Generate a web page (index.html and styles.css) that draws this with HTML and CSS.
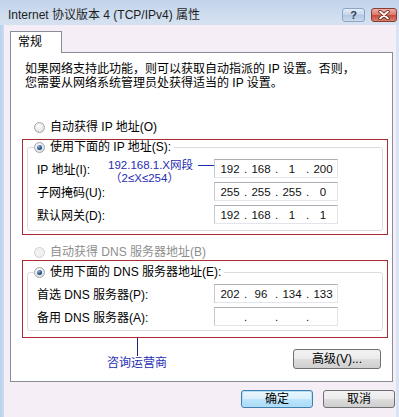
FILE: index.html
```html
<!DOCTYPE html>
<html>
<head>
    <meta charset="utf-8">
    <title>Internet 协议版本 4 (TCP/IPv4) 属性</title>
    <link rel="stylesheet" href="styles.css">
</head>
<body>
    <div class="window">
        <div class="titlebar">
            <span class="title">Internet 协议版本 4 (TCP/IPv4) 属性</span>
            <div class="caption-buttons">
                <span class="caption-btn help-btn">?</span>
                <span class="caption-btn close-btn">
                    <svg width="12" height="10" viewBox="0 0 12 10">
                        <path d="M2 1.5 L10 8.5 M10 1.5 L2 8.5" stroke="#5a1a14" stroke-width="3.4" stroke-linecap="round"/>
                        <path d="M2 1.5 L10 8.5 M10 1.5 L2 8.5" stroke="#fff" stroke-width="1.8" stroke-linecap="round"/>
                    </svg>
                </span>
            </div>
        </div>

        <div class="client">
            <div class="tab-strip">
                <div class="tab">常规</div>
            </div>

            <div class="tab-panel">
                <div class="intro">
                    <div>如果网络支持此功能，则可以获取自动指派的 IP 设置。否则，</div>
                    <div>您需要从网络系统管理员处获得适当的 IP 设置。</div>
                </div>

                <div class="radio-row first-radio"><span class="radio"></span>自动获得 IP 地址(O)</div>

                <div class="mark-box ip-mark">
                    <fieldset class="group">
                        <legend class="radio-row"><span class="radio checked"><span class="dot"></span></span>使用下面的 IP 地址(S):</legend>
                        <div class="field-list">
                            <div class="field-row">
                                <span class="field-label">IP 地址(I):</span>
                                <div class="note">
                                    <div class="note-line">192.168.1.X网段<span class="note-dash"></span></div>
                                    <div class="note-line sub">（2≤X≤254）</div>
                                </div>
                                <div class="ip-box">
                                    <span class="ip-seg">192</span><span class="ip-dot">.</span><span class="ip-seg">168</span><span class="ip-dot">.</span><span class="ip-seg">1</span><span class="ip-dot">.</span><span class="ip-seg">200</span>
                                </div>
                            </div>
                            <div class="field-row">
                                <span class="field-label">子网掩码(U):</span>
                                <div class="ip-box">
                                    <span class="ip-seg">255</span><span class="ip-dot">.</span><span class="ip-seg">255</span><span class="ip-dot">.</span><span class="ip-seg">255</span><span class="ip-dot">.</span><span class="ip-seg">0</span>
                                </div>
                            </div>
                            <div class="field-row">
                                <span class="field-label">默认网关(D):</span>
                                <div class="ip-box">
                                    <span class="ip-seg">192</span><span class="ip-dot">.</span><span class="ip-seg">168</span><span class="ip-dot">.</span><span class="ip-seg">1</span><span class="ip-dot">.</span><span class="ip-seg">1</span>
                                </div>
                            </div>
                        </div>
                    </fieldset>
                </div>

                <div class="radio-row disabled dns-auto"><span class="radio"></span>自动获得 DNS 服务器地址(B)</div>

                <div class="mark-box dns-mark">
                    <fieldset class="group">
                        <legend class="radio-row"><span class="radio checked"><span class="dot"></span></span>使用下面的 DNS 服务器地址(E):</legend>
                        <div class="field-list">
                            <div class="field-row">
                                <span class="field-label">首选 DNS 服务器(P):</span>
                                <div class="ip-box">
                                    <span class="ip-seg">202</span><span class="ip-dot">.</span><span class="ip-seg">96</span><span class="ip-dot">.</span><span class="ip-seg">134</span><span class="ip-dot">.</span><span class="ip-seg">133</span>
                                </div>
                            </div>
                            <div class="field-row">
                                <span class="field-label">备用 DNS 服务器(A):</span>
                                <div class="ip-box">
                                    <span class="ip-seg"></span><span class="ip-dot">.</span><span class="ip-seg"></span><span class="ip-dot">.</span><span class="ip-seg"></span><span class="ip-dot">.</span><span class="ip-seg"></span>
                                </div>
                            </div>
                        </div>
                    </fieldset>
                </div>

                <div class="panel-bottom">
                    <div class="isp-note">
                        <span class="isp-line"></span>
                        <span class="isp-text">咨询运营商</span>
                    </div>
                    <button class="button advanced-btn">高级(V)...</button>
                </div>
            </div>

            <div class="footer">
                <button class="button default-btn">确定</button>
                <button class="button">取消</button>
            </div>
        </div>
    </div>
</body>
</html>
```

FILE: styles.css
```css
body {
    margin: 0;
    font-family: "Liberation Sans", "Noto Sans CJK SC", sans-serif;
    font-size: 12px;
    color: #000;
}
.window {
    width: 399px;
    height: 417px;
    display: flex;
    flex-direction: column;
    overflow: hidden;
    background: linear-gradient(90deg, #b9cfeb, #cadcf1 4px, #d8e4f2 8px);
}
.titlebar {
    height: 25px;
    flex-shrink: 0;
    display: flex;
    justify-content: space-between;
    align-items: flex-start;
    background: linear-gradient(#c3d4ea, #d6e2f1);
}
.title {
    font-size: 12px;
    line-height: 14px;
    color: #1e1e1e;
    margin: 8px 0 0 8px;
}
.caption-buttons {
    display: flex;
    gap: 6px;
    margin: 8px 2px 0 0;
}
.caption-btn {
    height: 14px;
    box-sizing: border-box;
    border-radius: 3px;
    display: flex;
    align-items: center;
    justify-content: center;
}
.help-btn {
    width: 23px;
    border: 1px solid #8ea5c4;
    background: linear-gradient(#e4edf7, #c5d5ea 50%, #b4c8e2 51%, #cbdaee);
    font-size: 11px;
    font-weight: bold;
    color: #2b3b58;
}
.close-btn {
    width: 26px;
    border: 1px solid #8a3b34;
    background: linear-gradient(#eeb1a6, #d7786a 50%, #c3493b 51%, #d9806e);
}
.client {
    flex: 1;
    margin: 0 3px 0 4px;
    padding: 6px 1px 0 6px;
    background: #f6eef6;
    display: flex;
    flex-direction: column;
}
.tab-strip {
    display: flex;
    height: 21px;
}
.tab {
    position: relative;
    width: 52px;
    height: 22px;
    box-sizing: border-box;
    border: 1px solid #898c95;
    border-bottom: none;
    background: #fff;
    padding: 2px 0 0 7px;
    line-height: 17px;
}
.tab-panel {
    border: 1px solid #898c95;
    background: #fff;
    margin-right: 2px;
    padding: 0 4px 12px 11px;
}
.intro {
    margin: 9px 0 0 3px;
    line-height: 14px;
    white-space: nowrap;
}
.radio-row {
    display: flex;
    align-items: center;
    gap: 5px;
    height: 14px;
    line-height: 14px;
    white-space: nowrap;
}
.first-radio {
    margin: 30px 0 0 12px;
}
.radio {
    width: 11px;
    height: 11px;
    box-sizing: border-box;
    border-radius: 50%;
    border: 1px solid #a2a4a7;
    background: radial-gradient(circle at 40% 35%, #ffffff, #e2e3e5 70%, #c9cacd);
    display: flex;
    align-items: center;
    justify-content: center;
}
.dot {
    width: 5px;
    height: 5px;
    border-radius: 50%;
    background: radial-gradient(circle at 35% 30%, #8fb3dc, #1f4f86 60%, #0e2e57);
}
.disabled {
    color: #8e8e8e;
}
.disabled .radio {
    border-color: #cfd0d2;
    background: #f1f1f1;
}
.dns-auto {
    margin: 10px 0 0 12px;
}
.mark-box {
    border: 1px solid #aa2b33;
    padding: 0 4px 3px 4px;
}
.ip-mark {
    margin-top: 5px;
}
.dns-mark {
    margin-top: 1px;
    padding-bottom: 6px;
}
.dns-mark .group {
    margin-top: 4px;
    padding-bottom: 4px;
}
.group {
    margin: 0;
    padding: 0 0 6px 6px;
    border: 1px solid #dcdcdc;
    border-radius: 3px;
}
.group legend {
    padding: 0 3px 0 0;
}
.field-list {
    display: flex;
    flex-direction: column;
    gap: 4px;
    padding-top: 5px;
    margin-left: 3px;
}
.field-row {
    display: flex;
    align-items: center;
    height: 19px;
}
.field-label {
    white-space: nowrap;
}
.ip-box {
    width: 124px;
    height: 19px;
    box-sizing: border-box;
    margin-left: auto;
    margin-right: 44px;
    border: 1px solid #e2e6ec;
    border-top-color: #abadb3;
    border-left-color: #c6c9cf;
    padding-left: 2px;
    display: flex;
    align-items: center;
    font-size: 11.5px;
    color: #111;
}
.note + .ip-box {
    margin-left: 0;
}
.ip-seg {
    width: 26px;
    text-align: center;
}
.ip-dot {
    width: 5px;
    text-align: center;
}
.note {
    width: 106px;
    margin-left: auto;
    align-self: flex-start;
    height: 19px;
    color: #1f2db4;
    font-size: 11.5px;
    line-height: 13px;
}
.note-line {
    display: flex;
    align-items: center;
    white-space: nowrap;
}
.note-line.sub {
    padding-left: 2px;
}
.note-dash {
    flex: 1;
    height: 1px;
    margin-left: 5px;
    background: #1f2db4;
}
.panel-bottom {
    position: relative;
    display: flex;
    justify-content: flex-end;
    margin-top: 11px;
}
.isp-note {
    position: absolute;
    left: 84px;
    top: -11px;
    display: flex;
    flex-direction: column;
    align-items: center;
    width: 62px;
}
.isp-line {
    width: 1px;
    height: 18px;
    background: #1a2377;
}
.isp-text {
    color: #1f2db4;
    line-height: 14px;
    white-space: nowrap;
}
.button {
    font-family: "Liberation Sans", "Noto Sans CJK SC", sans-serif;
    font-size: 12px;
    color: #000;
    height: 19px;
    padding: 0;
    border: 1px solid #707070;
    border-radius: 3px;
    background: linear-gradient(#f2f2f2, #ebebeb 50%, #dddddd 51%, #cfcfcf);
    line-height: 15px;
}
.advanced-btn {
    width: 88px;
    height: 20px;
    margin-right: 7px;
}
.footer {
    display: flex;
    justify-content: flex-end;
    gap: 10px;
    margin-top: 8px;
}
.footer .button {
    width: 72px;
    height: 18px;
}
.default-btn {
    border-color: #3c7fb1;
    background: linear-gradient(#eaf6fd, #d9f0fc 50%, #bee6fd 51%, #a7d9f5);
    box-shadow: inset 0 0 0 1px #b6dff6;
}
```
